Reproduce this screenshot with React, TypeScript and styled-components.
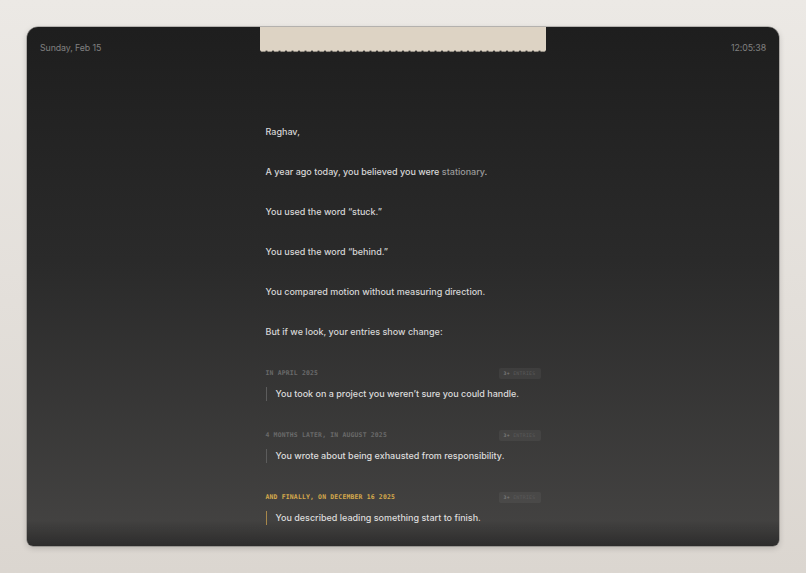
import styled, { createGlobalStyle } from "styled-components";

const Global = createGlobalStyle`
  html, body {
    margin: 0;
    padding: 0;
  }
  body {
    min-height: 573px;
    background: linear-gradient(#ece9e5, #dbd6d0);
    font-family: Inter, "Noto Sans", sans-serif;
  }
`

const Page = styled.div`
  padding: 27px;
`

const Card = styled.main`
  height: 519px;
  border-radius: 11px 11px 6px 6px;
  background:
    linear-gradient(to top, rgba(0, 0, 0, 0.35), rgba(0, 0, 0, 0) 26px),
    linear-gradient(#1e1e1e 0%, #2a2a2a 45%, #454443 100%);
  box-shadow: 0 2px 6px rgba(0, 0, 0, 0.18), 0 0 0 0.5px rgba(0, 0, 0, 0.4);
  display: flex;
  flex-direction: column;
  overflow: hidden;
`

const Header = styled.header`
  display: grid;
  grid-template-columns: 1fr 286px 1fr;
`

const Stamp = styled.span<{ $align: "left" | "right" }>`
  padding: 15px 13px 0;
  text-align: ${p => p.$align};
  font-size: 8.8px;
  color: #808080;
  letter-spacing: -0.1px;
`

const Tape = styled.div`
  display: flex;
  flex-direction: column;
`

const TapeBody = styled.div`
  height: 22px;
  background: #ddd3c4;
`

const Column = styled.section`
  width: 275px;
  margin: 72px auto 0;
  display: flex;
  flex-direction: column;
`

const Line = styled.p`
  margin: 0 0 26px;
  font-size: 9px;
  font-weight: 500;
  line-height: 14px;
  color: #d6d6d6;
`

const Muted = styled.span`
  color: #9a9a9a;
`

const Entries = styled.div`
  padding-top: 4px;
  display: flex;
  flex-direction: column;
  gap: 30px;
`

const Entry = styled.div`
  display: flex;
  flex-direction: column;
  gap: 10px;
`

const EntryHead = styled.div`
  display: flex;
  justify-content: space-between;
  align-items: center;
  height: 8px;
`

const Label = styled.span<{ $gold?: boolean }>`
  font-family: "DejaVu Sans Mono", "Liberation Mono", monospace;
  font-size: 6.4px;
  font-weight: bold;
  letter-spacing: 0.2px;
  color: ${p => (p.$gold ? "#d6aa4c" : "#6a6a6a")};
`

const Badge = styled.span`
  font-family: "DejaVu Sans Mono", "Liberation Mono", monospace;
  font-size: 4.8px;
  padding: 3px 5px;
  border-radius: 2px;
  background: rgba(255, 255, 255, 0.05);
  color: #5a5a5a;
  letter-spacing: 0.3px;

  b {
    color: #7c7c7c;
  }
`

const Quote = styled.blockquote<{ $gold?: boolean }>`
  margin: 0;
  padding-left: 9px;
  border-left: 1px solid ${p => (p.$gold ? "#a7874a" : "#5c5c5c")};
  font-size: 9px;
  font-weight: 500;
  line-height: 14px;
  color: #dcdcdc;
`

const Scallop = () => (
  <svg width="286" height="4" viewBox="0 0 286 4" style={{ display: "block" }}>
    <defs>
      <pattern id="sc" width="6.5" height="4" patternUnits="userSpaceOnUse">
        <path d="M0 0 H6.5 V1.2 Q4.9 3.6 3.25 2.4 Q1.6 3.6 0 1.2 Z" fill="#ddd3c4" />
        <path d="M0 1.2 Q1.6 3.6 3.25 2.4 Q4.9 3.6 6.5 1.2" fill="none" stroke="#8a8478" strokeWidth="0.5" />
      </pattern>
    </defs>
    <rect width="286" height="4" fill="url(#sc)" />
  </svg>
)

const entries = [
  { label: "IN APRIL 2025", text: "You took on a project you weren’t sure you could handle." },
  { label: "4 MONTHS LATER, IN AUGUST 2025", text: "You wrote about being exhausted from responsibility." },
  { label: "AND FINALLY, ON DECEMBER 16 2025", text: "You described leading something start to finish.", gold: true },
]

export default function App() {
  return (
    <Page>
      <Global />
      <Card>
        <Header>
          <Stamp $align="left">Sunday, Feb 15</Stamp>
          <Tape>
            <TapeBody />
            <Scallop />
          </Tape>
          <Stamp $align="right">12:05:38</Stamp>
        </Header>
        <Column>
          <Line>Raghav,</Line>
          <Line>A year ago today, you believed you were <Muted>stationary</Muted>.</Line>
          <Line>You used the word “stuck.”</Line>
          <Line>You used the word “behind.”</Line>
          <Line>You compared motion without measuring direction.</Line>
          <Line>But if we look, your entries show change:</Line>
          <Entries>
            {entries.map(e => (
              <Entry key={e.label}>
                <EntryHead>
                  <Label $gold={e.gold}>{e.label}</Label>
                  <Badge><b>3+</b> ENTRIES</Badge>
                </EntryHead>
                <Quote $gold={e.gold}>{e.text}</Quote>
              </Entry>
            ))}
          </Entries>
        </Column>
      </Card>
    </Page>
  )
}
